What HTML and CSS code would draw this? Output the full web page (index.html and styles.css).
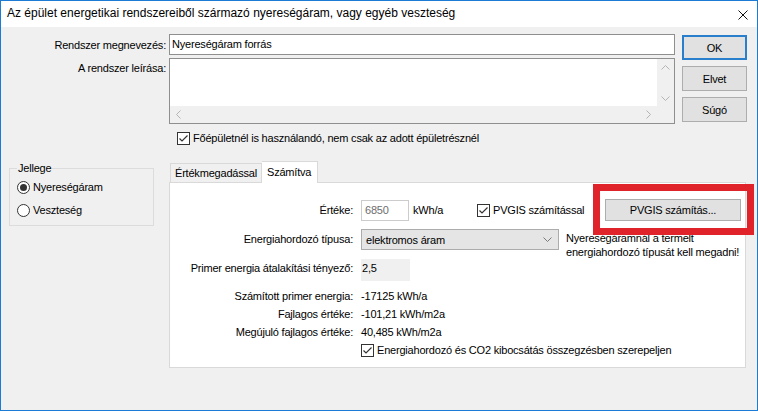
FILE: index.html
```html
<!DOCTYPE html>
<html lang="hu">
<head>
    <meta charset="UTF-8">
    <meta name="viewport" content="width=device-width, initial-scale=1.0">
    <title>Nyereségáram</title>
    <link rel="stylesheet" href="styles.css">
</head>
<body>
<div class="window">
    <div class="titlebar">
        <span class="title">Az épület energetikai rendszereiből származó nyereségáram, vagy egyéb veszteség</span>
        <svg class="close" width="10" height="10" viewBox="0 0 10 10"><path d="M0.5 0.5L9.5 9.5M9.5 0.5L0.5 9.5" stroke="#111" stroke-width="1"/></svg>
    </div>

    <div class="content">
        <div class="top">
            <div class="fields">
                <div class="field-row">
                    <span class="lbl">Rendszer megnevezés:</span>
                    <div class="textbox">Nyereségáram forrás</div>
                </div>
                <div class="field-row memo-row">
                    <span class="lbl lbl-top">A rendszer leírása:</span>
                    <div class="memo">
                        <div class="memo-text"></div>
                        <div class="vscroll">
                            <svg width="9" height="5" viewBox="0 0 9 5"><path d="M0.5 4.5L4.5 0.5L8.5 4.5" fill="none" stroke="#b4b4b4"/></svg>
                            <svg width="9" height="5" viewBox="0 0 9 5"><path d="M0.5 0.5L4.5 4.5L8.5 0.5" fill="none" stroke="#b4b4b4"/></svg>
                        </div>
                        <div class="hscroll">
                            <svg width="5" height="9" viewBox="0 0 5 9"><path d="M4.5 0.5L0.5 4.5L4.5 8.5" fill="none" stroke="#b4b4b4"/></svg>
                            <svg width="5" height="9" viewBox="0 0 5 9"><path d="M0.5 0.5L4.5 4.5L0.5 8.5" fill="none" stroke="#b4b4b4"/></svg>
                        </div>
                        <div class="corner"></div>
                    </div>
                </div>
                <div class="check-row main-check">
                    <svg class="cb" width="13" height="13" viewBox="0 0 13 13"><rect x="0.5" y="0.5" width="12" height="12" fill="#fff" stroke="#333"/><path d="M2.5 6.5L5 9L10.5 3.5" fill="none" stroke="#333" stroke-width="1.2"/></svg>
                    <span>Főépületnél is használandó, nem csak az adott épületrésznél</span>
                </div>
            </div>
            <div class="buttons">
                <button class="btn btn-default">OK</button>
                <button class="btn">Elvet</button>
                <button class="btn">Súgó</button>
            </div>
        </div>

        <div class="bottom">
            <fieldset class="group">
                <legend>Jellege</legend>
                <div class="radio-row">
                    <svg width="13" height="13" viewBox="0 0 13 13"><circle cx="6.5" cy="6.5" r="6" fill="#fff" stroke="#333"/><circle cx="6.5" cy="6.5" r="3.5" fill="#333"/></svg>
                    <span>Nyereségáram</span>
                </div>
                <div class="radio-row">
                    <svg width="13" height="13" viewBox="0 0 13 13"><circle cx="6.5" cy="6.5" r="6" fill="#fff" stroke="#333"/></svg>
                    <span>Veszteség</span>
                </div>
            </fieldset>

            <div class="tabs">
                <div class="tab-strip">
                    <div class="tab">Értékmegadással</div>
                    <div class="tab tab-active">Számítva</div>
                </div>
                <div class="panel">
                    <div class="prow prow-first">
                        <span class="plbl">Értéke:</span>
                        <div class="numbox">6850</div>
                        <span class="unit">kWh/a</span>
                        <svg class="cb" width="13" height="13" viewBox="0 0 13 13"><rect x="0.5" y="0.5" width="12" height="12" fill="#fff" stroke="#333"/><path d="M2.5 6.5L5 9L10.5 3.5" fill="none" stroke="#333" stroke-width="1.2"/></svg>
                        <span class="cb-text">PVGIS számítással</span>
                        <button class="btn btn-pvgis">PVGIS számítás...</button>
                    </div>
                    <div class="prow prow-select">
                        <span class="plbl plbl-select">Energiahordozó típusa:</span>
                        <div class="select">
                            <span>elektromos áram</span>
                            <svg width="9" height="5" viewBox="0 0 9 5"><path d="M0.5 0.5L4.5 4.5L8.5 0.5" fill="none" stroke="#7a7a7a"/></svg>
                        </div>
                        <div class="note">Nyereségáramnál a termelt<br>energiahordozó típusát kell megadni!</div>
                    </div>
                    <div class="prow prow-factor">
                        <span class="plbl">Primer energia átalakítási tényező:</span>
                        <div class="factor">2,5</div>
                    </div>
                    <div class="prow prow-calc">
                        <span class="plbl">Számított primer energia:</span>
                        <span>-17125 kWh/a</span>
                    </div>
                    <div class="prow">
                        <span class="plbl">Fajlagos értéke:</span>
                        <span>-101,21 kWh/m2a</span>
                    </div>
                    <div class="prow">
                        <span class="plbl">Megújuló fajlagos értéke:</span>
                        <span>40,485 kWh/m2a</span>
                    </div>
                    <div class="prow">
                        <span class="plbl"></span>
                        <svg class="cb" width="13" height="13" viewBox="0 0 13 13"><rect x="0.5" y="0.5" width="12" height="12" fill="#fff" stroke="#333"/><path d="M2.5 6.5L5 9L10.5 3.5" fill="none" stroke="#333" stroke-width="1.2"/></svg>
                        <span class="cb-text">Energiahordozó és CO2 kibocsátás összegzésben szerepeljen</span>
                    </div>
                </div>
            </div>
        </div>
    </div>

    <!-- annotation frame around the PVGIS button -->
    <div class="highlight"></div>
</div>
</body>
</html>
```

FILE: styles.css
```css
body {
    margin: 0;
    font-family: "Liberation Sans", Arial, sans-serif;
    font-size: 11px;
    letter-spacing: -0.2px;
    color: #000;
    background: #fff;
}
.window {
    position: relative;
    width: 758px;
    height: 411px;
    box-sizing: border-box;
    border: 1px solid #1c7cd5;
    background: #f0f0f0;
    display: flex;
    flex-direction: column;
}
.titlebar {
    height: 26px;
    flex: none;
    background: #fff;
    display: flex;
    justify-content: space-between;
    align-items: flex-start;
    padding: 5px 9px 0 6px;
    box-sizing: border-box;
    font-size: 12px;
    letter-spacing: 0;
    line-height: 14px;
}
.close {
    margin-top: 4px;
}
.content {
    padding-top: 7px;
    white-space: nowrap;
}
.top {
    display: flex;
}
.fields {
    width: 674px;
}
.field-row {
    display: flex;
    align-items: center;
}
.memo-row {
    align-items: flex-start;
    margin-top: 3px;
}
.lbl {
    width: 165px;
    margin-right: 3px;
    text-align: right;
    line-height: 14px;
    flex: none;
}
.lbl-top {
    padding-top: 3px;
}
.textbox {
    width: 506px;
    height: 21px;
    box-sizing: border-box;
    border: 1px solid #8e8f8f;
    background: #fff;
    padding-left: 2px;
    line-height: 19px;
}
.memo {
    width: 506px;
    height: 66px;
    box-sizing: border-box;
    border: 1px solid #8e8f8f;
    background: #fff;
    display: grid;
    grid-template-columns: 1fr 17px;
    grid-template-rows: 1fr 17px;
}
.vscroll {
    background: #f0f0f0;
    display: flex;
    flex-direction: column;
    justify-content: space-between;
    align-items: center;
    padding: 6px 0 5px;
}
.hscroll {
    background: #f0f0f0;
    display: flex;
    justify-content: space-between;
    align-items: center;
    padding: 0 6px;
}
.corner {
    background: #f0f0f0;
}
.check-row {
    display: flex;
    align-items: center;
    line-height: 14px;
}
.main-check {
    margin-top: 7px;
    padding-left: 176px;
}
.cb {
    flex: none;
    margin-right: 3px;
}
.buttons {
    margin-left: 7px;
    padding-top: 1px;
    display: flex;
    flex-direction: column;
    gap: 6px;
}
.btn {
    font-family: inherit;
    font-size: inherit;
    letter-spacing: inherit;
    color: #000;
    background: #e1e1e1;
    border: 1px solid #adadad;
    padding: 0;
    margin: 0;
}
.buttons .btn {
    width: 65px;
    height: 25px;
}
.btn-default {
    border: 2px solid #2a7fcc;
}
.bottom {
    display: flex;
    margin-top: 16px;
    padding-left: 8px;
}
.group {
    width: 145px;
    height: 65px;
    box-sizing: border-box;
    margin: 0 15px 0 0;
    padding: 5px 0 0 7px;
    border: 1px solid #dcdcdc;
    min-width: 0;
}
.group legend {
    padding: 0 1px;
    line-height: 14px;
}
.radio-row {
    display: flex;
    align-items: center;
    height: 14px;
    margin-bottom: 9px;
}
.radio-row svg {
    margin-right: 3px;
}
.tabs {
    width: 577px;
}
.tab-strip {
    display: flex;
    align-items: flex-end;
    height: 21px;
    padding-left: 1px;
}
.tab {
    height: 19px;
    box-sizing: border-box;
    border: 1px solid #d9d9d9;
    border-bottom: none;
    padding: 0 4px 0 4px;
    line-height: 19px;
    background: #f0f0f0;
}
.tab-active {
    position: relative;
    z-index: 1;
    height: 22px;
    margin-bottom: -1px;
    padding: 0 6px 0 5px;
    line-height: 20px;
    background: #fff;
    border-left: none;
}
.panel {
    height: 186px;
    box-sizing: border-box;
    border: 1px solid #d9d9d9;
    background: #fff;
}
.prow {
    display: flex;
    align-items: center;
    line-height: 18px;
}
.plbl {
    width: 183px;
    margin-right: 8px;
    text-align: right;
    flex: none;
}
.prow-first {
    margin-top: 16px;
    height: 22px;
}
.numbox {
    width: 48px;
    height: 21px;
    box-sizing: border-box;
    border: 1px solid #cccccc;
    color: #6d6d6d;
    padding-left: 3px;
    line-height: 19px;
}
.unit {
    width: 64px;
    margin-left: 4px;
}
.btn-pvgis {
    margin-left: auto;
    margin-right: 4px;
    width: 136px;
    height: 22px;
}
.prow-select {
    align-items: flex-start;
    margin-top: 8px;
}
.plbl-select {
    line-height: 21px;
}
.select {
    width: 198px;
    height: 21px;
    box-sizing: border-box;
    border: 1px solid #acacac;
    background: #e5e5e5;
    padding: 0 6px 0 4px;
    display: flex;
    justify-content: space-between;
    align-items: center;
}
.note {
    margin: 2px 0 0 7px;
    line-height: 14px;
}
.prow-factor {
    align-items: flex-start;
}
.factor {
    width: 48px;
    height: 22px;
    background: #f0f0f0;
    padding-left: 1px;
}
.prow-calc {
    margin-top: 6px;
}
.highlight {
    position: absolute;
    left: 592px;
    top: 183px;
    width: 161px;
    height: 51px;
    box-sizing: border-box;
    border: 7px solid #e0232b;
}
```
